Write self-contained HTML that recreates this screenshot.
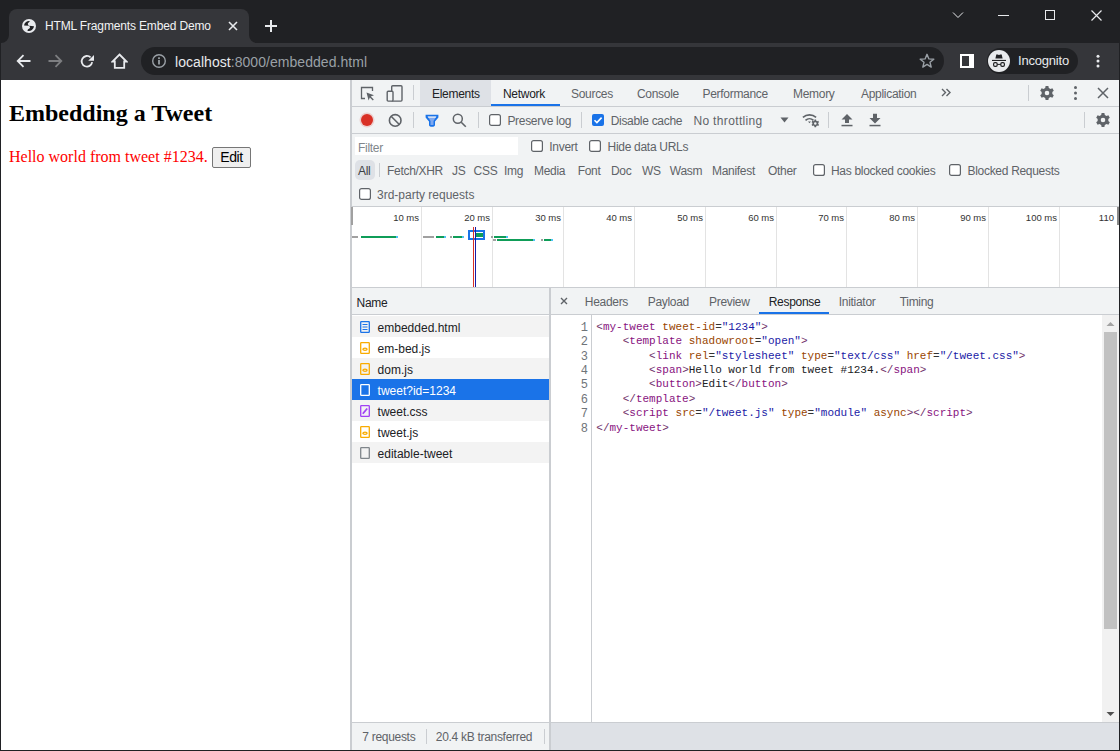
<!DOCTYPE html>
<html><head><meta charset="utf-8">
<style>
*{box-sizing:border-box;margin:0;padding:0}
html,body{width:1120px;height:751px;overflow:hidden;background:#202124}
body{position:relative;font-family:"Liberation Sans",sans-serif}
.a{position:absolute;display:block}
.t{position:absolute;white-space:nowrap;line-height:normal}
</style></head><body>
<div class="a" style="left:0px;top:0px;width:1120px;height:43px;background:#202124;"></div><div class="a" style="left:9px;top:9px;width:240px;height:34px;background:#35363a;border-radius:8px 8px 0 0;"></div><svg class="a" style="left:1px;top:35px;" width="8" height="8" viewBox="0 0 8 8"><path d="M8 0 V8 H0 A8 8 0 0 0 8 0Z" fill="#35363a"/></svg><svg class="a" style="left:249px;top:35px;" width="8" height="8" viewBox="0 0 8 8"><path d="M0 0 V8 H8 A8 8 0 0 1 0 0Z" fill="#35363a"/></svg><svg class="a" style="left:22px;top:19px;" width="14" height="14" viewBox="0 0 14 14"><circle cx="7" cy="7" r="7" fill="#e8eaed"/><path d="M7.9 2.1 A5.1 5.1 0 0 0 2.0 6.5 L7.4 6.8 C6.6 6.2 5.7 5.5 5.8 4.7 C6 3.8 7.4 3.2 7.9 2.1Z" fill="#202124"/><path d="M7.2 6.8 L12 7.3 A5.1 5.1 0 0 1 5.6 11.9 C5.5 11.1 5.8 10.3 6.6 9.9 C7.6 9.4 8.2 8.8 7.9 7.9Z" fill="#202124"/></svg><div class="t" style="left:45px;top:19px;font-size:12px;color:#f1f3f4;font-family:'Liberation Sans',sans-serif;font-weight:normal;letter-spacing:-0.15px;">HTML Fragments Embed Demo</div><svg class="a" style="left:228px;top:21px;" width="10" height="10" viewBox="0 0 10 10"><path d="M1 1 L9 9 M9 1 L1 9" stroke="#e8eaed" stroke-width="1.6"/></svg><svg class="a" style="left:265px;top:20px;" width="12" height="12" viewBox="0 0 12 12"><path d="M6 0 V12 M0 6 H12" stroke="#e8eaed" stroke-width="2"/></svg><svg class="a" style="left:952px;top:11px;" width="12" height="8" viewBox="0 0 12 8"><path d="M1 1.5 L6 6.5 L11 1.5" stroke="#e8eaed" stroke-width="1" fill="none"/></svg><div class="a" style="left:998px;top:15px;width:11px;height:1px;background:#e8eaed;"></div><div class="a" style="left:1045px;top:10px;width:10px;height:10px;background:transparent;border:1px solid #e8eaed;"></div><svg class="a" style="left:1091px;top:10px;" width="11" height="11" viewBox="0 0 11 11"><path d="M0.5 0.5 L10.5 10.5 M10.5 0.5 L0.5 10.5" stroke="#e8eaed" stroke-width="1.2"/></svg><div class="a" style="left:0px;top:43px;width:1120px;height:37px;background:#35363a;"></div><svg class="a" style="left:16px;top:54px;" width="15" height="14" viewBox="0 0 15 14"><path d="M14.5 7 H2 M7.5 1.2 L1.7 7 L7.5 12.8" stroke="#e8eaed" stroke-width="1.8" fill="none"/></svg><svg class="a" style="left:48px;top:54px;" width="15" height="14" viewBox="0 0 15 14"><path d="M0.5 7 H13 M7.5 1.2 L13.3 7 L7.5 12.8" stroke="#7d7e81" stroke-width="1.8" fill="none"/></svg><svg class="a" style="left:80px;top:54px;" width="15" height="15" viewBox="0 0 15 15"><path d="M12.2 8.2 A5.3 5.3 0 1 1 10.6 3.4" stroke="#e8eaed" stroke-width="1.8" fill="none"/><path d="M14 1 V6.8 H8.2Z" fill="#e8eaed"/></svg><svg class="a" style="left:111px;top:53px;" width="17" height="16" viewBox="0 0 17 16"><path d="M8.5 1.5 L15.5 8.5 H13.2 V14.8 H3.8 V8.5 H1.5Z" stroke="#e8eaed" stroke-width="1.8" fill="none" stroke-linejoin="miter"/></svg><div class="a" style="left:141px;top:47px;width:803px;height:28px;background:#202124;border-radius:14px;"></div><svg class="a" style="left:152px;top:54px;" width="14" height="14" viewBox="0 0 14 14"><circle cx="7" cy="7" r="6.3" stroke="#9aa0a6" stroke-width="1.4" fill="none"/><rect x="6.1" y="5.9" width="1.8" height="4.6" fill="#9aa0a6"/><rect x="6.1" y="3.3" width="1.8" height="1.7" fill="#9aa0a6"/></svg><div class="t" style="left:175px;top:54px;font-size:14px;font-family:'Liberation Sans',sans-serif;color:#e8eaed;letter-spacing:0.05px">localhost<span style="color:#9aa0a6">:8000/embedded.html</span></div><svg class="a" style="left:919px;top:53px;" width="16" height="16" viewBox="0 0 16 16"><path d="M8 1.3 L9.9 5.9 L14.8 6.2 L11 9.3 L12.2 14.1 L8 11.4 L3.8 14.1 L5 9.3 L1.2 6.2 L6.1 5.9Z" stroke="#9aa0a6" stroke-width="1.4" fill="none" stroke-linejoin="round"/></svg><svg class="a" style="left:960px;top:54px;" width="14" height="14" viewBox="0 0 14 14"><path d="M0 0 H14 V14 H0Z M2 2 V12 H9 V2Z" fill="#ffffff" fill-rule="evenodd"/></svg><div class="a" style="left:987px;top:48px;width:91px;height:26px;background:#202124;border-radius:13px;"></div><svg class="a" style="left:988px;top:50px;" width="22" height="22" viewBox="0 0 22 22"><circle cx="11" cy="11" r="11" fill="#e8eaed"/><path d="M7.4 8.6 L8.2 5 Q8.5 4 9.4 4.4 L11 5 L12.6 4.4 Q13.5 4 13.8 5 L14.6 8.6Z" fill="#202124"/><rect x="4" y="9.9" width="14" height="1.1" fill="#202124"/><rect x="5.6" y="12.7" width="3.6" height="3.6" rx="1.3" stroke="#202124" stroke-width="1.2" fill="none"/><rect x="12.8" y="12.7" width="3.6" height="3.6" rx="1.3" stroke="#202124" stroke-width="1.2" fill="none"/><path d="M9.2 14.4 H12.8" stroke="#202124" stroke-width="1"/></svg><div class="t" style="left:1018px;top:53px;font-size:13px;color:#e8eaed;font-family:'Liberation Sans',sans-serif;font-weight:normal;letter-spacing:-0.2px;">Incognito</div><svg class="a" style="left:1094.5px;top:53px;" width="6" height="16" viewBox="0 0 6 16"><circle cx="3" cy="3.3" r="1.5" fill="#e8eaed"/><circle cx="3" cy="8" r="1.5" fill="#e8eaed"/><circle cx="3" cy="13" r="1.5" fill="#e8eaed"/></svg><div class="a" style="left:1px;top:80px;width:349px;height:670px;background:#ffffff;"></div><div class="t" style="left:9px;top:100px;font-size:24px;color:#000;font-family:'Liberation Serif',serif;font-weight:bold;">Embedding a Tweet</div><div class="t" style="left:9px;top:148px;font-size:16px;color:#ff0000;font-family:'Liberation Serif',serif;font-weight:normal;">Hello world from tweet #1234.</div><div class="a" style="left:212px;top:147px;width:39px;height:21px;background:#efefef;border:1px solid #767676;border-radius:2px"></div><div class="t" style="left:220.3px;top:149px;font-size:14px;color:#000;font-family:'Liberation Sans',sans-serif;font-weight:normal;letter-spacing:-0.4px;">Edit</div><div class="a" style="left:350px;top:80px;width:770px;height:670px;background:#ffffff;"></div><div class="a" style="left:350px;top:80px;width:2px;height:670px;background:#cacdd1;"></div><div class="a" style="left:352px;top:80px;width:767px;height:26px;background:#f1f3f4;"></div><div class="a" style="left:352px;top:106px;width:767px;height:1px;background:#cacdd1;"></div><svg class="a" style="left:360px;top:86px;" width="15" height="15" viewBox="0 0 15 15"><path d="M5 12.5 H1.5 V1.5 H12.5 V5" stroke="#5f6368" stroke-width="1.3" fill="none"/><path d="M6.5 6.5 L14 9.3 L10.8 10.6 L13.8 13.6 L12.8 14.6 L9.8 11.6 L8.6 14.5Z" fill="#5f6368"/></svg><svg class="a" style="left:386px;top:85px;" width="17" height="17" viewBox="0 0 17 17"><rect x="5.7" y="0.7" width="10.3" height="15.4" rx="1" stroke="#5f6368" stroke-width="1.4" fill="none"/><rect x="1.2" y="6.2" width="5.8" height="9.9" rx="1" stroke="#5f6368" stroke-width="1.4" fill="#f1f3f4"/></svg><div class="a" style="left:413px;top:85px;width:1px;height:15px;background:#cacdd1;"></div><div class="a" style="left:420px;top:80px;width:71px;height:26px;background:#dee1e6;"></div><div class="a" style="left:491px;top:104px;width:69px;height:2px;background:#1a73e8;"></div><div class="t" style="left:432px;top:87px;font-size:12px;color:#202124;font-family:'Liberation Sans',sans-serif;font-weight:normal;letter-spacing:-0.3px;">Elements</div><div class="t" style="left:503px;top:87px;font-size:12px;color:#202124;font-family:'Liberation Sans',sans-serif;font-weight:normal;letter-spacing:-0.3px;">Network</div><div class="t" style="left:571px;top:87px;font-size:12px;color:#5f6368;font-family:'Liberation Sans',sans-serif;font-weight:normal;letter-spacing:-0.3px;">Sources</div><div class="t" style="left:637px;top:87px;font-size:12px;color:#5f6368;font-family:'Liberation Sans',sans-serif;font-weight:normal;letter-spacing:-0.3px;">Console</div><div class="t" style="left:702.5px;top:87px;font-size:12px;color:#5f6368;font-family:'Liberation Sans',sans-serif;font-weight:normal;letter-spacing:-0.3px;">Performance</div><div class="t" style="left:793px;top:87px;font-size:12px;color:#5f6368;font-family:'Liberation Sans',sans-serif;font-weight:normal;letter-spacing:-0.3px;">Memory</div><div class="t" style="left:861px;top:87px;font-size:12px;color:#5f6368;font-family:'Liberation Sans',sans-serif;font-weight:normal;letter-spacing:-0.3px;">Application</div><svg class="a" style="left:941px;top:88px;" width="11" height="9" viewBox="0 0 11 9"><path d="M1 1 L4.5 4.5 L1 8 M5.5 1 L9 4.5 L5.5 8" stroke="#5f6368" stroke-width="1.4" fill="none"/></svg><div class="a" style="left:1028px;top:85px;width:1px;height:16px;background:#cacdd1;"></div><svg class="a" style="left:1039px;top:85px;" width="16" height="16" viewBox="0 0 16 16"><g transform="translate(8,8)"><path d="M-1.4 -7 H1.4 L1.8 -5 A5 5 0 0 1 3.5 -4 L5.4 -4.7 L6.8 -2.3 L5.3 -1 A5 5 0 0 1 5.3 1 L6.8 2.3 L5.4 4.7 L3.5 4 A5 5 0 0 1 1.8 5 L1.4 7 H-1.4 L-1.8 5 A5 5 0 0 1 -3.5 4 L-5.4 4.7 L-6.8 2.3 L-5.3 1 A5 5 0 0 1 -5.3 -1 L-6.8 -2.3 L-5.4 -4.7 L-3.5 -4 A5 5 0 0 1 -1.8 -5Z M0 -2.3 A2.3 2.3 0 1 0 0 2.3 A2.3 2.3 0 1 0 0 -2.3Z" fill="#5f6368" fill-rule="evenodd"/></g></svg><svg class="a" style="left:1072px;top:85px;" width="7" height="16" viewBox="0 0 7 16"><circle cx="3.5" cy="2.5" r="1.5" fill="#5f6368"/><circle cx="3.5" cy="8" r="1.5" fill="#5f6368"/><circle cx="3.5" cy="13.5" r="1.5" fill="#5f6368"/></svg><svg class="a" style="left:1097px;top:87px;" width="12" height="12" viewBox="0 0 12 12"><path d="M1 1 L11 11 M11 1 L1 11" stroke="#5f6368" stroke-width="1.5"/></svg><div class="a" style="left:352px;top:107px;width:767px;height:26px;background:#f1f3f4;"></div><div class="a" style="left:352px;top:133px;width:767px;height:1px;background:#cacdd1;"></div><svg class="a" style="left:358px;top:111px;" width="18" height="18" viewBox="0 0 18 18"><circle cx="9" cy="9" r="7.5" fill="#d93025" opacity="0.18"/><circle cx="9" cy="9" r="6" fill="#d93025"/></svg><svg class="a" style="left:388px;top:113px;" width="14" height="14" viewBox="0 0 14 14"><circle cx="7.2" cy="7.4" r="5.8" stroke="#5f6368" stroke-width="1.6" fill="none"/><path d="M3.1 3.3 L11.3 11.5" stroke="#5f6368" stroke-width="1.6"/></svg><div class="a" style="left:413px;top:112px;width:1px;height:16px;background:#cacdd1;"></div><svg class="a" style="left:425px;top:114px;" width="14" height="13" viewBox="0 0 14 13"><path d="M0.6 0.8 H13.4 V3.6 L10 7.6 V11 Q10 12.8 7 12.8 Q4 12.8 4 11 V7.6 L0.6 3.6Z" fill="#1a73e8"/><path d="M2.6 2.4 H11.4 L8.5 6.9 V11.1 H5.5 V6.9Z" fill="#7fa9f0"/><path d="M2.6 2.4 H11.4 L10.5 3.8 H3.5Z" fill="#f1f3f4"/></svg><svg class="a" style="left:452px;top:113px;" width="15" height="15" viewBox="0 0 15 15"><circle cx="5.8" cy="5.8" r="4.5" stroke="#5f6368" stroke-width="1.5" fill="none"/><path d="M9.2 9.2 L13.8 13.8" stroke="#5f6368" stroke-width="1.6"/></svg><div class="a" style="left:478px;top:112px;width:1px;height:16px;background:#cacdd1;"></div><svg class="a" style="left:489px;top:114px;" width="12" height="12" viewBox="0 0 12 12"><rect x="0.6" y="0.6" width="10.8" height="10.8" rx="2" stroke="#5f6368" stroke-width="1.2" fill="#fff"/></svg><div class="t" style="left:507.4px;top:114px;font-size:12px;color:#5f6368;font-family:'Liberation Sans',sans-serif;font-weight:normal;letter-spacing:-0.3px;">Preserve log</div><div class="a" style="left:581px;top:112px;width:1px;height:16px;background:#cacdd1;"></div><svg class="a" style="left:592px;top:114px;" width="12" height="12" viewBox="0 0 12 12"><rect x="0" y="0" width="12" height="12" rx="2" fill="#1a73e8"/><path d="M2.5 6.2 L4.9 8.6 L9.6 3.6" stroke="#fff" stroke-width="1.6" fill="none"/></svg><div class="t" style="left:610.7px;top:114px;font-size:12px;color:#5f6368;font-family:'Liberation Sans',sans-serif;font-weight:normal;letter-spacing:-0.3px;">Disable cache</div><div class="t" style="left:693.4px;top:114px;font-size:12px;color:#5f6368;font-family:'Liberation Sans',sans-serif;font-weight:normal;letter-spacing:0.35px;">No throttling</div><svg class="a" style="left:780px;top:117px;" width="9" height="6" viewBox="0 0 9 6"><path d="M0.5 0.5 H8.5 L4.5 5.5Z" fill="#5f6368"/></svg><svg class="a" style="left:802px;top:113px;" width="18" height="15" viewBox="0 0 18 15"><path d="M0.9 4.4 A10 10 0 0 1 14.1 4.4 M3.5 7.3 A6 6 0 0 1 11.5 7.3" stroke="#5f6368" stroke-width="1.6" fill="none"/><path d="M6 8.6 H9 L7.5 10.2Z" fill="#5f6368"/><g transform="translate(13.3,10.4) scale(0.55)"><path d="M-1.4 -7 H1.4 L1.8 -5 A5 5 0 0 1 3.5 -4 L5.4 -4.7 L6.8 -2.3 L5.3 -1 A5 5 0 0 1 5.3 1 L6.8 2.3 L5.4 4.7 L3.5 4 A5 5 0 0 1 1.8 5 L1.4 7 H-1.4 L-1.8 5 A5 5 0 0 1 -3.5 4 L-5.4 4.7 L-6.8 2.3 L-5.3 1 A5 5 0 0 1 -5.3 -1 L-6.8 -2.3 L-5.4 -4.7 L-3.5 -4 A5 5 0 0 1 -1.8 -5Z M0 -2.3 A2.3 2.3 0 1 0 0 2.3 A2.3 2.3 0 1 0 0 -2.3Z" fill="#5f6368" fill-rule="evenodd"/></g></svg><div class="a" style="left:828px;top:112px;width:1px;height:16px;background:#cacdd1;"></div><svg class="a" style="left:841px;top:113px;" width="12" height="14" viewBox="0 0 12 14"><path d="M6 1 L11.5 6.5 H8 V10 H4 V6.5 H0.5Z" fill="#5f6368"/><rect x="0.5" y="11.8" width="11" height="1.5" fill="#5f6368"/></svg><svg class="a" style="left:869px;top:113px;" width="12" height="14" viewBox="0 0 12 14"><path d="M6 10.5 L11.5 5 H8 V0.8 H4 V5 H0.5Z" fill="#5f6368"/><rect x="0.5" y="11.8" width="11" height="1.5" fill="#5f6368"/></svg><div class="a" style="left:1084px;top:112px;width:1px;height:16px;background:#cacdd1;"></div><svg class="a" style="left:1095px;top:112px;" width="16" height="16" viewBox="0 0 16 16"><g transform="translate(8,8)"><path d="M-1.4 -7 H1.4 L1.8 -5 A5 5 0 0 1 3.5 -4 L5.4 -4.7 L6.8 -2.3 L5.3 -1 A5 5 0 0 1 5.3 1 L6.8 2.3 L5.4 4.7 L3.5 4 A5 5 0 0 1 1.8 5 L1.4 7 H-1.4 L-1.8 5 A5 5 0 0 1 -3.5 4 L-5.4 4.7 L-6.8 2.3 L-5.3 1 A5 5 0 0 1 -5.3 -1 L-6.8 -2.3 L-5.4 -4.7 L-3.5 -4 A5 5 0 0 1 -1.8 -5Z M0 -2.3 A2.3 2.3 0 1 0 0 2.3 A2.3 2.3 0 1 0 0 -2.3Z" fill="#5f6368" fill-rule="evenodd"/></g></svg><div class="a" style="left:352px;top:134px;width:767px;height:72px;background:#f1f3f4;"></div><div class="a" style="left:352px;top:206px;width:767px;height:1px;background:#cacdd1;"></div><div class="a" style="left:355px;top:137px;width:163px;height:18px;background:#ffffff;"></div><div class="t" style="left:358px;top:141px;font-size:12px;color:#80868b;font-family:'Liberation Sans',sans-serif;font-weight:normal;letter-spacing:-0.3px;">Filter</div><svg class="a" style="left:531px;top:140px;" width="12" height="12" viewBox="0 0 12 12"><rect x="0.6" y="0.6" width="10.8" height="10.8" rx="2" stroke="#5f6368" stroke-width="1.2" fill="#fff"/></svg><div class="t" style="left:549.3px;top:140px;font-size:12px;color:#5f6368;font-family:'Liberation Sans',sans-serif;font-weight:normal;letter-spacing:-0.3px;">Invert</div><svg class="a" style="left:589px;top:140px;" width="12" height="12" viewBox="0 0 12 12"><rect x="0.6" y="0.6" width="10.8" height="10.8" rx="2" stroke="#5f6368" stroke-width="1.2" fill="#fff"/></svg><div class="t" style="left:607.6px;top:140px;font-size:12px;color:#5f6368;font-family:'Liberation Sans',sans-serif;font-weight:normal;letter-spacing:-0.3px;">Hide data URLs</div><div class="a" style="left:355px;top:160px;width:20px;height:20px;background:#dee1e6;border-radius:5px;"></div><div class="t" style="left:358px;top:164px;font-size:12px;color:#3c4043;font-family:'Liberation Sans',sans-serif;font-weight:normal;letter-spacing:-0.3px;">All</div><div class="a" style="left:379px;top:163px;width:1px;height:14px;background:#cacdd1;"></div><div class="t" style="left:387px;top:164px;font-size:12px;color:#5f6368;font-family:'Liberation Sans',sans-serif;font-weight:normal;letter-spacing:-0.3px;">Fetch/XHR</div><div class="t" style="left:452px;top:164px;font-size:12px;color:#5f6368;font-family:'Liberation Sans',sans-serif;font-weight:normal;letter-spacing:-0.3px;">JS</div><div class="t" style="left:473.6px;top:164px;font-size:12px;color:#5f6368;font-family:'Liberation Sans',sans-serif;font-weight:normal;letter-spacing:-0.3px;">CSS</div><div class="t" style="left:504px;top:164px;font-size:12px;color:#5f6368;font-family:'Liberation Sans',sans-serif;font-weight:normal;letter-spacing:-0.3px;">Img</div><div class="t" style="left:534px;top:164px;font-size:12px;color:#5f6368;font-family:'Liberation Sans',sans-serif;font-weight:normal;letter-spacing:-0.3px;">Media</div><div class="t" style="left:577.7px;top:164px;font-size:12px;color:#5f6368;font-family:'Liberation Sans',sans-serif;font-weight:normal;letter-spacing:-0.3px;">Font</div><div class="t" style="left:611px;top:164px;font-size:12px;color:#5f6368;font-family:'Liberation Sans',sans-serif;font-weight:normal;letter-spacing:-0.3px;">Doc</div><div class="t" style="left:642px;top:164px;font-size:12px;color:#5f6368;font-family:'Liberation Sans',sans-serif;font-weight:normal;letter-spacing:-0.3px;">WS</div><div class="t" style="left:669.8px;top:164px;font-size:12px;color:#5f6368;font-family:'Liberation Sans',sans-serif;font-weight:normal;letter-spacing:-0.3px;">Wasm</div><div class="t" style="left:712px;top:164px;font-size:12px;color:#5f6368;font-family:'Liberation Sans',sans-serif;font-weight:normal;letter-spacing:-0.3px;">Manifest</div><div class="t" style="left:768px;top:164px;font-size:12px;color:#5f6368;font-family:'Liberation Sans',sans-serif;font-weight:normal;letter-spacing:-0.3px;">Other</div><svg class="a" style="left:813px;top:164px;" width="12" height="12" viewBox="0 0 12 12"><rect x="0.6" y="0.6" width="10.8" height="10.8" rx="2" stroke="#5f6368" stroke-width="1.2" fill="#fff"/></svg><div class="t" style="left:831px;top:164px;font-size:12px;color:#5f6368;font-family:'Liberation Sans',sans-serif;font-weight:normal;letter-spacing:-0.3px;">Has blocked cookies</div><svg class="a" style="left:949px;top:164px;" width="12" height="12" viewBox="0 0 12 12"><rect x="0.6" y="0.6" width="10.8" height="10.8" rx="2" stroke="#5f6368" stroke-width="1.2" fill="#fff"/></svg><div class="t" style="left:967.5px;top:164px;font-size:12px;color:#5f6368;font-family:'Liberation Sans',sans-serif;font-weight:normal;letter-spacing:-0.3px;">Blocked Requests</div><svg class="a" style="left:359px;top:188px;" width="12" height="12" viewBox="0 0 12 12"><rect x="0.6" y="0.6" width="10.8" height="10.8" rx="2" stroke="#5f6368" stroke-width="1.2" fill="#fff"/></svg><div class="t" style="left:377px;top:188px;font-size:12px;color:#5f6368;font-family:'Liberation Sans',sans-serif;font-weight:normal;letter-spacing:0px;">3rd-party requests</div><div class="a" style="left:352px;top:207px;width:767px;height:80px;background:#ffffff;"></div><div class="a" style="left:352px;top:287px;width:767px;height:1px;background:#cacdd1;"></div><div class="a" style="left:421px;top:207px;width:1px;height:80px;background:#e3e3e3;"></div><div class="t" style="left:362px;top:212px;width:57px;text-align:right;font-size:9.5px;color:#333;font-family:'Liberation Sans',sans-serif">10 ms</div><div class="a" style="left:492px;top:207px;width:1px;height:80px;background:#e3e3e3;"></div><div class="t" style="left:433px;top:212px;width:57px;text-align:right;font-size:9.5px;color:#333;font-family:'Liberation Sans',sans-serif">20 ms</div><div class="a" style="left:563px;top:207px;width:1px;height:80px;background:#e3e3e3;"></div><div class="t" style="left:504px;top:212px;width:57px;text-align:right;font-size:9.5px;color:#333;font-family:'Liberation Sans',sans-serif">30 ms</div><div class="a" style="left:634px;top:207px;width:1px;height:80px;background:#e3e3e3;"></div><div class="t" style="left:575px;top:212px;width:57px;text-align:right;font-size:9.5px;color:#333;font-family:'Liberation Sans',sans-serif">40 ms</div><div class="a" style="left:705px;top:207px;width:1px;height:80px;background:#e3e3e3;"></div><div class="t" style="left:646px;top:212px;width:57px;text-align:right;font-size:9.5px;color:#333;font-family:'Liberation Sans',sans-serif">50 ms</div><div class="a" style="left:776px;top:207px;width:1px;height:80px;background:#e3e3e3;"></div><div class="t" style="left:717px;top:212px;width:57px;text-align:right;font-size:9.5px;color:#333;font-family:'Liberation Sans',sans-serif">60 ms</div><div class="a" style="left:846px;top:207px;width:1px;height:80px;background:#e3e3e3;"></div><div class="t" style="left:787px;top:212px;width:57px;text-align:right;font-size:9.5px;color:#333;font-family:'Liberation Sans',sans-serif">70 ms</div><div class="a" style="left:917px;top:207px;width:1px;height:80px;background:#e3e3e3;"></div><div class="t" style="left:858px;top:212px;width:57px;text-align:right;font-size:9.5px;color:#333;font-family:'Liberation Sans',sans-serif">80 ms</div><div class="a" style="left:988px;top:207px;width:1px;height:80px;background:#e3e3e3;"></div><div class="t" style="left:929px;top:212px;width:57px;text-align:right;font-size:9.5px;color:#333;font-family:'Liberation Sans',sans-serif">90 ms</div><div class="a" style="left:1059px;top:207px;width:1px;height:80px;background:#e3e3e3;"></div><div class="t" style="left:1000px;top:212px;width:57px;text-align:right;font-size:9.5px;color:#333;font-family:'Liberation Sans',sans-serif">100 ms</div><div class="a" style="left:351px;top:207px;width:2px;height:18px;background:#a0a0a0;"></div><div class="a" style="left:1117px;top:207px;width:2px;height:18px;background:#8a8a8a;"></div><div class="t" style="left:1060px;top:212px;width:54px;text-align:right;font-size:9.5px;color:#333;font-family:'Liberation Sans',sans-serif">110</div><div class="a" style="left:352px;top:236px;width:6px;height:2px;background:#a0a0a0;"></div><div class="a" style="left:361px;top:236px;width:35px;height:2px;background:#0f9d58;"></div><div class="a" style="left:396px;top:236px;width:2px;height:2px;background:#4fc3f7;"></div><div class="a" style="left:423px;top:236px;width:11px;height:2px;background:#a0a0a0;"></div><div class="a" style="left:436px;top:236px;width:8px;height:2px;background:#0f9d58;"></div><div class="a" style="left:444px;top:236px;width:2px;height:2px;background:#4fc3f7;"></div><div class="a" style="left:450px;top:236px;width:2px;height:2px;background:#a0a0a0;"></div><div class="a" style="left:453px;top:236px;width:9px;height:2px;background:#0f9d58;"></div><div class="a" style="left:462px;top:236px;width:2px;height:2px;background:#4fc3f7;"></div><div class="a" style="left:491px;top:236px;width:2px;height:2px;background:#a0a0a0;"></div><div class="a" style="left:494px;top:236px;width:12px;height:2px;background:#0f9d58;"></div><div class="a" style="left:506px;top:236px;width:2px;height:2px;background:#4fc3f7;"></div><div class="a" style="left:493px;top:239px;width:3px;height:2px;background:#a0a0a0;"></div><div class="a" style="left:497px;top:239px;width:36px;height:2px;background:#0f9d58;"></div><div class="a" style="left:533px;top:239px;width:2px;height:2px;background:#4fc3f7;"></div><div class="a" style="left:541px;top:239px;width:2px;height:2px;background:#a0a0a0;"></div><div class="a" style="left:544px;top:239px;width:7px;height:2px;background:#0f9d58;"></div><div class="a" style="left:551px;top:239px;width:2px;height:2px;background:#4fc3f7;"></div><div class="a" style="left:468px;top:230px;width:17px;height:10px;background:#ffffff;border:2px solid #1a73e8;"></div><div class="a" style="left:476px;top:233px;width:7px;height:4px;background:#0f9d58;"></div><div class="a" style="left:473px;top:227px;width:1px;height:60px;background:#d93025;"></div><div class="a" style="left:475px;top:227px;width:1px;height:60px;background:#1a1aa6;"></div><div class="a" style="left:352px;top:288px;width:197px;height:26px;background:#f1f3f4;"></div><div class="a" style="left:352px;top:314px;width:197px;height:1px;background:#cacdd1;"></div><div class="t" style="left:356.6px;top:296px;font-size:12px;color:#202124;font-family:'Liberation Sans',sans-serif;font-weight:normal;letter-spacing:-0.3px;">Name</div><div class="a" style="left:549px;top:288px;width:2px;height:462px;background:#cacdd1;"></div><div class="a" style="left:352px;top:316px;width:197px;height:21px;background:#f3f3f3;"></div><svg class="a" style="left:360px;top:321px;" width="10" height="12" viewBox="0 0 10 12"><rect x="0.7" y="0.7" width="8.6" height="10.6" rx="0.6" stroke="#1a73e8" stroke-width="1.3" fill="none"/><path d="M2.5 3.5 H7.5 M2.5 6 H7.5 M2.5 8.5 H7.5" stroke="#1a73e8" stroke-width="1"/></svg><div class="t" style="left:377.6px;top:321px;font-size:12px;color:#202124;font-family:'Liberation Sans',sans-serif;font-weight:normal;letter-spacing:0px;">embedded.html</div><svg class="a" style="left:360px;top:342px;" width="10" height="12" viewBox="0 0 10 12"><rect x="0.7" y="0.7" width="8.6" height="10.6" rx="0.6" stroke="#f9ab00" stroke-width="1.3" fill="none"/><ellipse cx="5" cy="7.2" rx="2.1" ry="1.1" stroke="#f9ab00" stroke-width="1.3" fill="none"/></svg><div class="t" style="left:377.6px;top:342px;font-size:12px;color:#202124;font-family:'Liberation Sans',sans-serif;font-weight:normal;letter-spacing:0px;">em-bed.js</div><div class="a" style="left:352px;top:358px;width:197px;height:21px;background:#f3f3f3;"></div><svg class="a" style="left:360px;top:363px;" width="10" height="12" viewBox="0 0 10 12"><rect x="0.7" y="0.7" width="8.6" height="10.6" rx="0.6" stroke="#f9ab00" stroke-width="1.3" fill="none"/><ellipse cx="5" cy="7.2" rx="2.1" ry="1.1" stroke="#f9ab00" stroke-width="1.3" fill="none"/></svg><div class="t" style="left:377.6px;top:363px;font-size:12px;color:#202124;font-family:'Liberation Sans',sans-serif;font-weight:normal;letter-spacing:0px;">dom.js</div><div class="a" style="left:352px;top:379px;width:197px;height:21px;background:#1a73e8;"></div><svg class="a" style="left:360px;top:384px;" width="10" height="12" viewBox="0 0 10 12"><rect x="0.7" y="0.7" width="8.6" height="10.6" rx="0.6" stroke="#ffffff" stroke-width="1.3" fill="none"/></svg><div class="t" style="left:377.6px;top:384px;font-size:12px;color:#ffffff;font-family:'Liberation Sans',sans-serif;font-weight:normal;letter-spacing:0px;">tweet?id=1234</div><div class="a" style="left:352px;top:400px;width:197px;height:21px;background:#f3f3f3;"></div><svg class="a" style="left:360px;top:405px;" width="10" height="12" viewBox="0 0 10 12"><rect x="0.7" y="0.7" width="8.6" height="10.6" rx="0.6" stroke="#a142f4" stroke-width="1.3" fill="none"/><path d="M2.8 8.8 L7.2 3.5" stroke="#a142f4" stroke-width="1.8"/></svg><div class="t" style="left:377.6px;top:405px;font-size:12px;color:#202124;font-family:'Liberation Sans',sans-serif;font-weight:normal;letter-spacing:0px;">tweet.css</div><svg class="a" style="left:360px;top:426px;" width="10" height="12" viewBox="0 0 10 12"><rect x="0.7" y="0.7" width="8.6" height="10.6" rx="0.6" stroke="#f9ab00" stroke-width="1.3" fill="none"/><ellipse cx="5" cy="7.2" rx="2.1" ry="1.1" stroke="#f9ab00" stroke-width="1.3" fill="none"/></svg><div class="t" style="left:377.6px;top:426px;font-size:12px;color:#202124;font-family:'Liberation Sans',sans-serif;font-weight:normal;letter-spacing:0px;">tweet.js</div><div class="a" style="left:352px;top:442px;width:197px;height:21px;background:#f3f3f3;"></div><svg class="a" style="left:360px;top:447px;" width="10" height="12" viewBox="0 0 10 12"><rect x="0.7" y="0.7" width="8.6" height="10.6" rx="0.6" stroke="#80868b" stroke-width="1.3" fill="none"/></svg><div class="t" style="left:377.6px;top:447px;font-size:12px;color:#202124;font-family:'Liberation Sans',sans-serif;font-weight:normal;letter-spacing:0px;">editable-tweet</div><div class="a" style="left:352px;top:722px;width:197px;height:1px;background:#cacdd1;"></div><div class="a" style="left:352px;top:723px;width:197px;height:27px;background:#f1f3f4;"></div><div class="t" style="left:362.3px;top:730px;font-size:12px;color:#5f6368;font-family:'Liberation Sans',sans-serif;font-weight:normal;letter-spacing:-0.3px;">7 requests</div><div class="a" style="left:426px;top:729px;width:1px;height:15px;background:#cacdd1;"></div><div class="t" style="left:435.8px;top:730px;font-size:12px;color:#5f6368;font-family:'Liberation Sans',sans-serif;font-weight:normal;letter-spacing:-0.3px;">20.4 kB transferred</div><div class="a" style="left:544px;top:729px;width:1px;height:15px;background:#cacdd1;"></div><div class="a" style="left:551px;top:288px;width:568px;height:26px;background:#f1f3f4;"></div><div class="a" style="left:551px;top:314px;width:568px;height:1px;background:#cacdd1;"></div><svg class="a" style="left:560px;top:297px;" width="8" height="8" viewBox="0 0 8 8"><path d="M1 1 L7 7 M7 1 L1 7" stroke="#5f6368" stroke-width="1.4"/></svg><div class="t" style="left:584.8px;top:295px;font-size:12px;color:#5f6368;font-family:'Liberation Sans',sans-serif;font-weight:normal;letter-spacing:-0.3px;">Headers</div><div class="t" style="left:647.7px;top:295px;font-size:12px;color:#5f6368;font-family:'Liberation Sans',sans-serif;font-weight:normal;letter-spacing:-0.3px;">Payload</div><div class="t" style="left:709px;top:295px;font-size:12px;color:#5f6368;font-family:'Liberation Sans',sans-serif;font-weight:normal;letter-spacing:-0.3px;">Preview</div><div class="t" style="left:768.7px;top:295px;font-size:12px;color:#202124;font-family:'Liberation Sans',sans-serif;font-weight:normal;letter-spacing:-0.3px;">Response</div><div class="t" style="left:838.8px;top:295px;font-size:12px;color:#5f6368;font-family:'Liberation Sans',sans-serif;font-weight:normal;letter-spacing:-0.3px;">Initiator</div><div class="t" style="left:899.7px;top:295px;font-size:12px;color:#5f6368;font-family:'Liberation Sans',sans-serif;font-weight:normal;letter-spacing:-0.3px;">Timing</div><div class="a" style="left:759px;top:312px;width:70px;height:2px;background:#1a73e8;"></div><div class="a" style="left:591px;top:315px;width:1px;height:407px;background:#cacdd1;"></div><div class="t" style="left:560px;top:321px;width:28px;text-align:right;font-family:'Liberation Mono',monospace;font-size:12px;color:#6f7479">1</div><div class="t" style="left:596.3px;top:321px;font-family:'Liberation Mono',monospace;font-size:11px;color:#202124;white-space:pre"><span style="color:#70306a">&lt;</span><span style="color:#881280">my-tweet</span> <span style="color:#994500">tweet-id</span><span style="color:#333333">=</span><span style="color:#1a1aa6">"1234"</span><span style="color:#70306a">&gt;</span></div><div class="t" style="left:560px;top:335px;width:28px;text-align:right;font-family:'Liberation Mono',monospace;font-size:12px;color:#6f7479">2</div><div class="t" style="left:596.3px;top:335px;font-family:'Liberation Mono',monospace;font-size:11px;color:#202124;white-space:pre">    <span style="color:#70306a">&lt;</span><span style="color:#881280">template</span> <span style="color:#994500">shadowroot</span><span style="color:#333333">=</span><span style="color:#1a1aa6">"open"</span><span style="color:#70306a">&gt;</span></div><div class="t" style="left:560px;top:350px;width:28px;text-align:right;font-family:'Liberation Mono',monospace;font-size:12px;color:#6f7479">3</div><div class="t" style="left:596.3px;top:350px;font-family:'Liberation Mono',monospace;font-size:11px;color:#202124;white-space:pre">        <span style="color:#70306a">&lt;</span><span style="color:#881280">link</span> <span style="color:#994500">rel</span><span style="color:#333333">=</span><span style="color:#1a1aa6">"stylesheet"</span> <span style="color:#994500">type</span><span style="color:#333333">=</span><span style="color:#1a1aa6">"text/css"</span> <span style="color:#994500">href</span><span style="color:#333333">=</span><span style="color:#1a1aa6">"/tweet.css"</span><span style="color:#70306a">&gt;</span></div><div class="t" style="left:560px;top:364px;width:28px;text-align:right;font-family:'Liberation Mono',monospace;font-size:12px;color:#6f7479">4</div><div class="t" style="left:596.3px;top:364px;font-family:'Liberation Mono',monospace;font-size:11px;color:#202124;white-space:pre">        <span style="color:#70306a">&lt;</span><span style="color:#881280">span</span><span style="color:#70306a">&gt;</span>Hello world from tweet #1234.<span style="color:#70306a">&lt;/</span><span style="color:#881280">span</span><span style="color:#70306a">&gt;</span></div><div class="t" style="left:560px;top:378px;width:28px;text-align:right;font-family:'Liberation Mono',monospace;font-size:12px;color:#6f7479">5</div><div class="t" style="left:596.3px;top:378px;font-family:'Liberation Mono',monospace;font-size:11px;color:#202124;white-space:pre">        <span style="color:#70306a">&lt;</span><span style="color:#881280">button</span><span style="color:#70306a">&gt;</span>Edit<span style="color:#70306a">&lt;/</span><span style="color:#881280">button</span><span style="color:#70306a">&gt;</span></div><div class="t" style="left:560px;top:393px;width:28px;text-align:right;font-family:'Liberation Mono',monospace;font-size:12px;color:#6f7479">6</div><div class="t" style="left:596.3px;top:393px;font-family:'Liberation Mono',monospace;font-size:11px;color:#202124;white-space:pre">    <span style="color:#70306a">&lt;/</span><span style="color:#881280">template</span><span style="color:#70306a">&gt;</span></div><div class="t" style="left:560px;top:407px;width:28px;text-align:right;font-family:'Liberation Mono',monospace;font-size:12px;color:#6f7479">7</div><div class="t" style="left:596.3px;top:407px;font-family:'Liberation Mono',monospace;font-size:11px;color:#202124;white-space:pre">    <span style="color:#70306a">&lt;</span><span style="color:#881280">script</span> <span style="color:#994500">src</span><span style="color:#333333">=</span><span style="color:#1a1aa6">"/tweet.js"</span> <span style="color:#994500">type</span><span style="color:#333333">=</span><span style="color:#1a1aa6">"module"</span> <span style="color:#994500">async</span><span style="color:#70306a">&gt;&lt;/</span><span style="color:#881280">script</span><span style="color:#70306a">&gt;</span></div><div class="t" style="left:560px;top:422px;width:28px;text-align:right;font-family:'Liberation Mono',monospace;font-size:12px;color:#6f7479">8</div><div class="t" style="left:596.3px;top:422px;font-family:'Liberation Mono',monospace;font-size:11px;color:#202124;white-space:pre"><span style="color:#70306a">&lt;/</span><span style="color:#881280">my-tweet</span><span style="color:#70306a">&gt;</span></div><div class="a" style="left:1102px;top:315px;width:17px;height:407px;background:#f1f1f1;"></div><div class="a" style="left:1104px;top:332px;width:13px;height:297px;background:#c1c1c1;"></div><svg class="a" style="left:1106px;top:321px;" width="9" height="6" viewBox="0 0 9 6"><path d="M0.5 5 L4.5 1 L8.5 5Z" fill="#a3a3a3"/></svg><svg class="a" style="left:1106px;top:711px;" width="9" height="6" viewBox="0 0 9 6"><path d="M0.5 1 L4.5 5 L8.5 1Z" fill="#505050"/></svg><div class="a" style="left:551px;top:722px;width:568px;height:1px;background:#cacdd1;"></div><div class="a" style="left:551px;top:723px;width:568px;height:27px;background:#dee1e6;"></div><div class="a" style="left:0px;top:0px;width:1px;height:751px;background:#202124;"></div><div class="a" style="left:1119px;top:0px;width:1px;height:751px;background:#202124;"></div><div class="a" style="left:0px;top:750px;width:1120px;height:1px;background:#202124;"></div></body></html>
